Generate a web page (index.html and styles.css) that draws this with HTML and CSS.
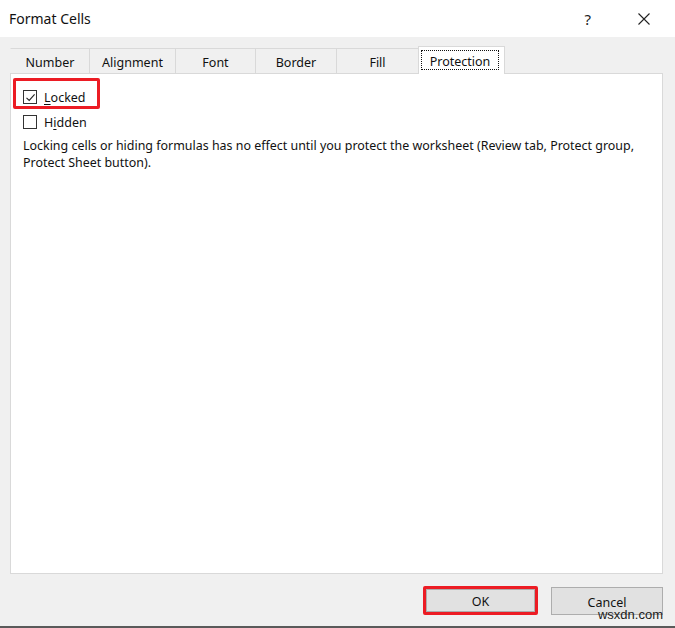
FILE: index.html
```html
<!DOCTYPE html>
<html>
<head>
<meta charset="utf-8">
<link rel="stylesheet" href="styles.css">
</head>
<body>
<div class="dialog">
  <div class="titlebar">
    <div class="title">Format Cells</div>
    <div class="title-actions">
      <span class="help">?</span>
      <svg class="close" width="12" height="12" viewBox="0 0 12 12"><path d="M0.5 0.5 L11.5 11.5 M11.5 0.5 L0.5 11.5" stroke="#222" stroke-width="1.1" fill="none"/></svg>
    </div>
  </div>
  <div class="body">
    <div class="tabs">
      <div class="tab tab-number">Number</div>
      <div class="tab tab-alignment">Alignment</div>
      <div class="tab tab-font">Font</div>
      <div class="tab tab-border">Border</div>
      <div class="tab tab-fill">Fill</div>
      <div class="tab tab-protection active"><span class="focus">Protection</span></div>
    </div>
    <div class="panel">
      <div class="check-row row-locked">
        <span class="box"><svg width="11" height="11" viewBox="0 0 11 11"><path d="M1.5 5.8 L4.2 8.4 L9.6 2.4" stroke="#222" stroke-width="1.1" fill="none"/></svg></span>
        <span class="label"><u>L</u>ocked</span>
      </div>
      <div class="check-row row-hidden">
        <span class="box"></span>
        <span class="label">H<u>i</u>dden</span>
      </div>
      <p class="note">Locking cells or hiding formulas has no effect until you protect the worksheet (Review tab, Protect group, Protect Sheet button).</p>
      <div class="highlight hl-locked"></div>
    </div>
    <div class="buttons">
      <div class="btn-wrap hl-ok"><div class="btn btn-ok">OK</div></div>
      <div class="btn btn-cancel">Cancel</div>
      <div class="watermark">wsxdn.com</div>
    </div>
  </div>
</div>
</body>
</html>
```
FILE: styles.css
```css
* { box-sizing: border-box; }
html, body { margin: 0; padding: 0; }
body {
  width: 675px;
  height: 628px;
  overflow: hidden;
  font-family: "Noto Sans", "Open Sans", "Liberation Sans", sans-serif;
  color: #111;
  background: #f0f0f0;
}
.dialog {
  width: 675px;
  height: 628px;
  background: #f0f0f0;
  border-bottom: 2px solid #5a5a5a;
  display: flex;
  flex-direction: column;
}
.titlebar {
  height: 37px;
  background: #fff;
  display: flex;
  align-items: center;
  justify-content: space-between;
  padding: 0 25px 0 9px;
}
.title {
  font-size: 14px;
  color: #111;
  padding-bottom: 1px;
}
.title-actions {
  display: flex;
  align-items: center;
  gap: 47px;
}
.help {
  font-size: 15px;
  color: #222;
}
.close { display: block; }
.body {
  flex: 1;
  padding: 9px 12px 0 10px;
  position: relative;
}
.tabs {
  display: flex;
  align-items: flex-end;
  height: 27px;
  position: relative;
  z-index: 1;
}
.tab {
  height: 25px;
  font-size: 12.5px;
  display: flex;
  align-items: center;
  justify-content: center;
  border-top: 1px solid #d9d9d9;
  border-left: 1px solid #d9d9d9;
  background: #f0f0f0;
  color: #111;
  padding-top: 3px;
}
.tab-number { width: 79px; border-left-color: transparent; }
.tab-alignment { width: 86px; }
.tab-font { width: 80px; }
.tab-border { width: 81px; }
.tab-fill { width: 82px; }
.tab-protection { width: 87px; }
.tab.active {
  height: 28px;
  margin-bottom: -1px;
  background: #fff;
  border: 1px solid #d9d9d9;
  border-bottom: none;
  padding: 3px 5px 4px 2px;
  align-items: stretch;
}
.focus {
  flex: 1;
  display: flex;
  align-items: center;
  justify-content: center;
  border: 1px dotted #111;
  padding-top: 2px;
}
.panel {
  position: relative;
  height: 501px;
  background: #fff;
  border: 1px solid #d9d9d9;
  padding: 15px 12px 0 12px;
}
.check-row {
  display: flex;
  align-items: center;
  gap: 7px;
  height: 16px;
  margin-bottom: 9px;
  font-size: 12.5px;
}
.box {
  width: 14px;
  height: 14px;
  border: 1px solid #333;
  background: #fff;
  display: flex;
  align-items: center;
  justify-content: center;
}
.box svg { display: block; }
.label u { text-decoration-thickness: 1px; text-underline-offset: 2px; }
.note {
  margin: 0;
  margin-top: -2px;
  font-size: 12.45px;
  line-height: 17px;
  width: 635px;
}
.highlight {
  position: absolute;
  border: 3px solid #ec1c24;
  border-radius: 2px;
}
.hl-locked {
  left: 2px;
  top: 4px;
  width: 87px;
  height: 31px;
}
.buttons {
  display: flex;
  justify-content: flex-end;
  align-items: center;
  gap: 13px;
  margin-top: 12px;
  position: relative;
}
.btn {
  font-size: 12.5px;
  display: flex;
  align-items: center;
  justify-content: center;
  background: #e1e1e1;
  border: 1px solid #adadad;
  color: #111;
  padding-top: 2px;
}
.btn-wrap {
  border: 3px solid #ec1c24;
  border-radius: 2px;
  width: 115px;
  height: 29px;
  display: flex;
}
.btn-ok { flex: 1; }
.btn-cancel {
  width: 112px;
  height: 28px;
  margin-top: 1px;
}
.watermark {
  position: absolute;
  right: 0;
  top: 21px;
  font-family: "Liberation Sans", Arial, sans-serif;
  font-size: 13px;
  color: #1a1a1a;
  background: transparent;
}
```
